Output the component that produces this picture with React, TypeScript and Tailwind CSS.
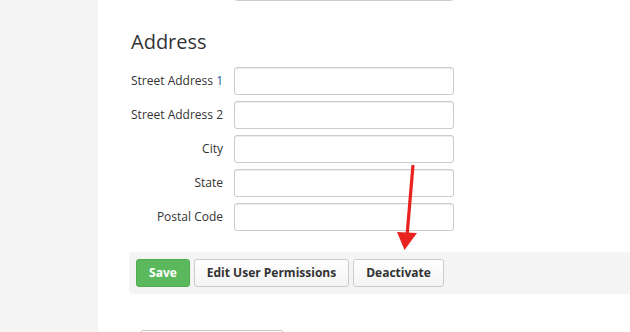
import React from "react";

const font = { fontFamily: '"Open Sans", "Liberation Sans", sans-serif' };

function Row({ label, accent }: { label: string; accent?: string }) {
  return (
    <div className="flex items-center h-[28px]">
      <div className="w-[92px] text-right text-[12px] text-[#333] pr-0 whitespace-nowrap">
        {label}
        {accent && <span className="text-[#1d5f9e]"> {accent}</span>}
      </div>
      <div className="ml-[11px] w-[220px] h-[28px] border border-[#ccc] rounded-[3px] bg-white shadow-[inset_0_1px_1px_rgba(0,0,0,0.075)]" />
    </div>
  );
}

export default function App() {
  return (
    <div className="flex w-[630px] h-[332px] overflow-hidden" style={font}>
      <div className="w-[98px] shrink-0 bg-[#f4f4f4]" />
      <div className="relative flex-1 bg-white overflow-hidden">
        <div className="pl-[33px]">
          <div className="ml-[103px] -mt-[27px] w-[220px] h-[28px] border border-[#ccc] rounded-[3px] bg-white" />
          <h2 className="mt-[29px] text-[20px] leading-[24px] font-normal text-[#333]">Address</h2>
          <div className="mt-[13px] flex flex-col gap-[6px]">
            <Row label="Street Address" accent="1" />
            <Row label="Street Address 2" />
            <Row label="City" />
            <Row label="State" />
            <Row label="Postal Code" />
          </div>
        </div>
        <div className="ml-[31px] mt-[21px] h-[42px] bg-[#f4f4f4] rounded-l-[4px] flex items-start pt-[7px] pl-[7px] gap-[4px]">
          <button className="w-[54px] h-[28px] rounded-[3px] bg-[#5cb85c] border border-[#4cae4c] text-white text-[12px] font-bold">
            Save
          </button>
          <button className="w-[155px] h-[28px] rounded-[3px] bg-gradient-to-b from-white to-[#f3f3f3] border border-[#ccc] text-[#333] text-[12px] font-bold">
            Edit User Permissions
          </button>
          <button className="w-[91px] h-[28px] rounded-[3px] bg-gradient-to-b from-white to-[#f3f3f3] border border-[#ccc] text-[#333] text-[12px] font-bold">
            Deactivate
          </button>
        </div>
        <div className="ml-[42px] mt-[36px] w-[144px] h-[28px] border border-[#ccc] rounded-[3px]" />
        <svg className="absolute left-0 top-0" width="532" height="332" viewBox="98 0 532 332">
          <line x1="413" y1="165" x2="407" y2="236" stroke="#e8231f" strokeWidth="3.2" />
          <polygon points="397,232 417,233 404.5,250" fill="#e8231f" />
        </svg>
      </div>
    </div>
  );
}
